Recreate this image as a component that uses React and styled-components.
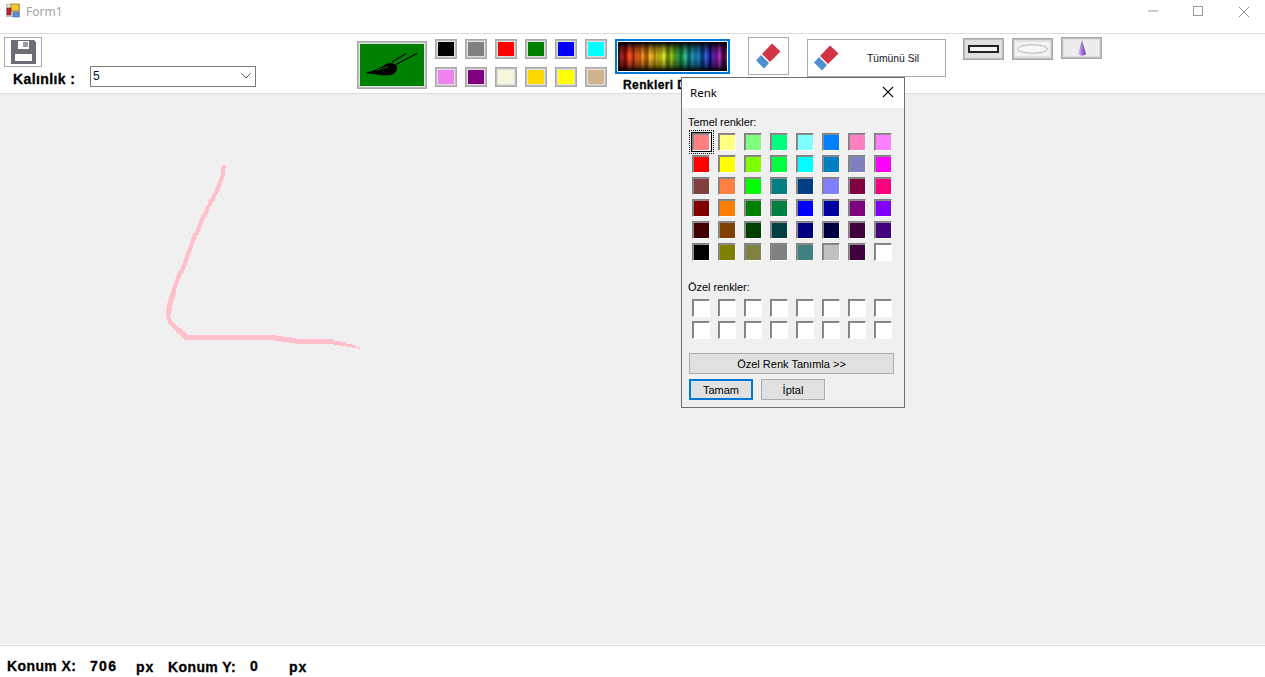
import React from "react";
import styled, { createGlobalStyle } from "styled-components";

const Global = createGlobalStyle`
  html, body { margin: 0; padding: 0; background: #fff; }
  body { font-family: "Liberation Sans", Arial, sans-serif; }
  #root { width: 1265px; height: 677px; overflow: hidden; }
`;

const Window = styled.div`
  position: relative;
  width: 1265px;
  height: 677px;
  display: flex;
  flex-direction: column;
  background: #fff;
  overflow: hidden;
`;

const TitleBar = styled.header`
  height: 33px;
  flex: none;
  display: flex;
  align-items: flex-start;
  border-bottom: 1px solid #dcdcdc;
  padding-left: 6px;
`;
const TitleText = styled.span`
  font: 12px/24px "Noto Sans", "Open Sans", sans-serif;
  color: #a3a3a3;
  margin-left: 6px;
`;
const WinButtons = styled.div`
  margin-left: auto;
  display: flex;
  padding-right: 14px;
  padding-top: 5px;
  gap: 33px;
  svg { display: block; }
`;

const Toolbar = styled.div`
  height: 59px;
  flex: none;
  display: flex;
  align-items: flex-start;
  border-bottom: 1px solid #dcdcdc;
`;
const LeftGroup = styled.div`
  margin: 3px 0 0 4px;
  width: 252px;
`;
const SaveButton = styled.div`
  box-sizing: border-box;
  width: 38px;
  height: 30px;
  border: 1px solid #ababab;
  margin-bottom: -1px;
  display: flex;
  align-items: center;
  justify-content: center;
`;
const ThicknessRow = styled.div`
  display: flex;
  align-items: center;
  padding-left: 9px;
`;
const BoldLabel = styled.span`
  font: bold 14px "Liberation Sans", Arial, sans-serif;
  letter-spacing: 0.4px;
  -webkit-text-stroke: 0.3px #000;
  color: #000;
  white-space: nowrap;
`;
const ThicknessLabel = styled(BoldLabel)`
  width: 77px;
  position: relative;
  top: 2px;
`;
const Combo = styled.div`
  box-sizing: border-box;
  width: 166px;
  height: 21px;
  border: 1px solid #7a7a7a;
  display: flex;
  align-items: center;
  justify-content: space-between;
  padding: 0 4px 2px 2px;
  font-size: 12px;
  color: #001040;
`;
const BrushButton = styled.div`
  box-sizing: border-box;
  margin: 7px 0 0 101px;
  width: 70px;
  height: 48px;
  border: 1px solid #a8a8a8;
  background: #008000;
  box-shadow: inset 0 0 0 1px #bdbdbd, inset 0 0 0 2px #e1e1e1;
  display: flex;
  align-items: center;
  justify-content: center;
`;
const Palette = styled.div`
  margin: 5px 0 0 8px;
  display: grid;
  grid-template-columns: repeat(6, 22px);
  grid-auto-rows: 20px;
  gap: 8px;
`;
const ColorSwatch = styled.div`
  box-sizing: border-box;
  border: 1px solid #a8a8a8;
  box-shadow: inset 0 0 0 1px #bdbdbd, inset 0 0 0 2px #e1e1e1;
  background: ${(p) => p.$c};
`;
const SpectrumColumn = styled.div`
  margin: 5px 0 0 8px;
  width: 115px;
`;
const SpectrumButton = styled.div`
  box-sizing: border-box;
  height: 35px;
  border: 2px solid #0078d7;
  padding: 1px;
  background: #fff;
`;
const SpectrumFill = styled.div`
  height: 100%;
  background:
    linear-gradient(180deg, #000 0%, rgba(0,0,0,.35) 22%, rgba(0,0,0,0) 45%, rgba(0,0,0,0) 55%, rgba(0,0,0,.35) 80%, #000 100%),
    repeating-linear-gradient(90deg, rgba(0,0,0,.2) 0 2px, rgba(255,255,255,.12) 3px 5px, rgba(0,0,0,.1) 6px 7px),
    repeating-linear-gradient(90deg, rgba(255,255,255,.1) 0 3px, rgba(0,0,0,.2) 4px 8px, rgba(255,255,255,.06) 9px 11px),
    linear-gradient(90deg, #200000 0%, #c00000 5%, #f03000 12%, #f07000 22%, #e8b000 33%, #e0e000 40%, #70b000 50%, #10a030 56%, #0090a0 66%, #0060c0 76%, #1010b0 84%, #a000a0 93%, #300030 100%);
`;
const SpectrumLabel = styled(BoldLabel)`
  display: block;
  font-size: 12px;
  padding: 4px 0 0 8px;
  letter-spacing: 0.4px;
`;
const EraserButton = styled.div`
  box-sizing: border-box;
  margin: 3px 0 0 18px;
  width: 41px;
  height: 38px;
  border: 1px solid #ababab;
  display: flex;
  align-items: center;
  justify-content: center;
`;
const ClearButton = styled.div`
  box-sizing: border-box;
  margin: 5px 0 0 18px;
  width: 139px;
  height: 38px;
  border: 1px solid #ababab;
  display: flex;
  align-items: center;
  padding-left: 5px;
  font-size: 10.3px;
  color: #101828;
`;
const ClearText = styled.span`
  margin-left: 27px;
`;
const ShapeButton = styled.div`
  box-sizing: border-box;
  margin: ${(p) => p.$top}px 0 0 ${(p) => p.$left}px;
  width: 41px;
  height: 22px;
  border: 1px solid #a8a8a8;
  box-shadow: inset 0 0 0 1px #bdbdbd;
  background: #e1e1e1;
  display: flex;
  align-items: center;
  justify-content: center;
`;

const Canvas = styled.main`
  height: 550px;
  flex: none;
  background: #f0f0f0;
  svg { display: block; }
`;
const Footer = styled.footer`
  margin-top: 1px;
  flex: 1;
  border-top: 1px solid #dcdcdc;
  display: flex;
  padding: 12px 0 0 7px;
`;
const FooterField = styled(BoldLabel)`
  width: ${(p) => p.$w}px;
  flex: none;
  position: relative;
  top: ${(p) => p.$dy || 0}px;
  letter-spacing: ${(p) => p.$ls || 0.4}px;
`;

const Dialog = styled.div`
  position: absolute;
  left: 681px;
  top: 77px;
  width: 224px;
  height: 331px;
  box-sizing: border-box;
  border: 1px solid #6e6e6e;
  background: #f0f0f0;
  font-size: 11px;
  color: #000;
`;
const DialogTitle = styled.div`
  box-sizing: border-box;
  height: 30px;
  background: #fff;
  display: flex;
  align-items: center;
  justify-content: space-between;
  padding: 0 10px 2px 8px;
  font: 11.5px "Noto Sans", "Open Sans", sans-serif;
  svg { display: block; }
`;
const DialogBody = styled.div`
  padding: 8px 0 0 6px;
`;
const SectionLabel = styled.div`
  line-height: 13px;
  height: 13px;
  letter-spacing: -0.05px;
  margin-top: ${(p) => p.$top || 0}px;
`;
const ColorGrid = styled.div`
  margin: ${(p) => p.$top}px 0 0 4px;
  display: grid;
  grid-template-columns: repeat(8, 18px);
  grid-auto-rows: 18px;
  column-gap: 8px;
  row-gap: 4px;
`;
const BaseCell = styled.div`
  position: relative;
  box-sizing: border-box;
  border-top: 1px solid #808080;
  border-left: 1px solid #808080;
  border-right: 1px solid #fff;
  border-bottom: 1px solid #fff;
  box-shadow: inset 1px 1px 0 #8c8c8c;
  background: ${(p) => p.$c};
`;
const SelectMark = styled.span`
  position: absolute;
  left: -4px;
  top: -4px;
  right: -5px;
  bottom: -4px;
  border: 1px dotted #000;
  &::after {
    content: "";
    position: absolute;
    inset: 1px;
    border: 1px solid #000;
  }
`;
const DefineButton = styled.div`
  box-sizing: border-box;
  margin: 14px 0 0 1px;
  width: 205px;
  height: 21px;
  border: 1px solid #adadad;
  background: #e1e1e1;
  display: flex;
  align-items: center;
  justify-content: center;
  font-size: 11px;
`;
const ButtonRow = styled.div`
  display: flex;
  gap: 8px;
  margin: 5px 0 0 1px;
`;
const DialogButton = styled.div`
  box-sizing: border-box;
  width: 64px;
  height: 21px;
  border: ${(p) => (p.$primary ? "2px solid #0078d7" : "1px solid #adadad")};
  background: #e1e1e1;
  display: flex;
  align-items: center;
  justify-content: center;
  font-size: 11px;
`;

const topColors = ["#000000", "#808080", "#ff0000", "#008000", "#0000ff", "#00ffff", "#ee82ee", "#800080", "#f5f5dc", "#ffd700", "#ffff00", "#d2b48c"];
const baseColors = [
  "#FF8080","#FFFF80","#80FF80","#00FF80","#80FFFF","#0080FF","#FF80C0","#FF80FF",
  "#FF0000","#FFFF00","#80FF00","#00FF40","#00FFFF","#0080C0","#8080C0","#FF00FF",
  "#804040","#FF8040","#00FF00","#008080","#004080","#8080FF","#800040","#FF0080",
  "#800000","#FF8000","#008000","#008040","#0000FF","#0000A0","#800080","#8000FF",
  "#400000","#804000","#004000","#004040","#000080","#000040","#400040","#400080",
  "#000000","#808000","#808040","#808080","#408080","#C0C0C0","#400040","#FFFFFF",
];

const AppIcon = () => (
  <svg width="14" height="16" viewBox="0 0 14 16" style={{ marginTop: 3 }}>
    <rect x="0.5" y="1.5" width="13" height="12" fill="#e8e8e8" stroke="#b9b9b9" />
    <rect x="5" y="1" width="8" height="7" fill="#f3c53a" stroke="#a87a10" strokeWidth="0.8" />
    <rect x="1" y="5" width="4" height="7" fill="#b8272b" stroke="#7a1a1a" strokeWidth="0.6" />
    <rect x="7" y="9" width="6" height="5" fill="#5a8fd8" stroke="#34609c" strokeWidth="0.6" />
  </svg>
);
const Floppy = () => (
  <svg width="25" height="24" viewBox="0 0 25 24">
    <path fill="#6d6d75" fillRule="evenodd" d="M0 0H23L25 2V24H0ZM7 1V9H18V1ZM4 14V21H21V14Z" />
    <rect x="8" y="2" width="4" height="5" fill="#ffffff" />
    <rect x="12" y="2" width="5" height="5" fill="#9c9ca2" />
  </svg>
);
const Chevron = () => (
  <svg width="10" height="6" viewBox="0 0 10 6"><path d="M0.5 0.5l4.5 4.5 4.5-4.5" fill="none" stroke="#555" strokeWidth="1" /></svg>
);
const Brush = () => (
  <svg width="52" height="24" viewBox="0 0 52 24">
    <path d="M26 9L40.6 0.3M30 11.5L51 0.5" stroke="#000" strokeWidth="1.2" fill="none" />
    <path d="M0 19.5C8 18 16 14 20 11C24 9 28 10 31 13C32 17 29 21 25 22C18 23.5 8 21 0 20Z" fill="#000" />
    <path d="M11 17C15 15.5 18 15 22 14" stroke="#0a8a0a" strokeWidth="0.8" fill="none" />
  </svg>
);
const Eraser = () => (
  <svg width="27" height="28" viewBox="0 0 27 28">
    <path d="M17 1.5L25.5 9.5L15 20L7 12Z" fill="#d13447" />
    <path d="M6 13L14 21L9 26.5L1 18.5Z" fill="#4f8fd0" />
  </svg>
);
const RectIcon = () => (
  <svg width="31" height="8" viewBox="0 0 31 8"><rect x="1" y="1" width="29" height="6" fill="#f4f4f4" stroke="#222" strokeWidth="2" /></svg>
);
const EllipseIcon = () => (
  <svg width="35" height="14" viewBox="0 0 35 14" style={{ background: "#f2f2f2" }}><ellipse cx="17.5" cy="7" rx="15" ry="4.2" fill="#f6f6f6" stroke="#b4b4b4" /></svg>
);
const ConeIcon = () => (
  <svg width="35" height="16" viewBox="0 0 35 16" style={{ background: "#ededed" }}>
    <defs><linearGradient id="cone" x1="0" x2="1"><stop offset="0" stopColor="#e0d0f2" /><stop offset="0.6" stopColor="#9468cc" /><stop offset="1" stopColor="#6d3fb0" /></linearGradient></defs>
    <path d="M18 0L22 14C20.5 16 15.5 16 14 14Z" fill="url(#cone)" />
  </svg>
);

/* The free-hand line: the app stamped small squares along the mouse track. */
const track = [
  [224,167,5],[221,180,4],[216,193,4],[208,207,4],[200,225,4],[192,243,4],[185,263,4],[178,278,4],[173,292,4],[170,302,5],[168,315,5],[170,322,4],[178,330,4],[186,337,5],[268,337,5],[283,339,5],[297,341,5],[333,342,5],[347,345,4],[356,347,3],[361,348,2],
];
const stamps = [];
track.slice(1).forEach(([x, y, s], i) => {
  const [px, py] = track[i];
  const n = Math.max(1, Math.round(Math.hypot(x - px, y - py) / 3));
  for (let k = 0; k < n; k++) {
    stamps.push([Math.round(px + ((x - px) * k) / n - s / 2), Math.round(py + ((y - py) * k) / n - s / 2) - 94, s]);
  }
});

export default function App() {
  return (
    <Window>
      <Global />
      <TitleBar>
        <AppIcon />
        <TitleText>Form1</TitleText>
        <WinButtons>
          <svg width="12" height="12" viewBox="0 0 12 12"><path d="M1 6H11" stroke="#999" /></svg>
          <svg width="12" height="12" viewBox="0 0 12 12"><rect x="1.5" y="1.5" width="9" height="9" fill="none" stroke="#999" /></svg>
          <svg width="14" height="14" viewBox="0 0 14 14"><path d="M2 2L12 12M12 2L2 12" stroke="#999" /></svg>
        </WinButtons>
      </TitleBar>
      <Toolbar>
        <LeftGroup>
          <SaveButton><Floppy /></SaveButton>
          <ThicknessRow>
            <ThicknessLabel>Kalınlık :</ThicknessLabel>
            <Combo>5<Chevron /></Combo>
          </ThicknessRow>
        </LeftGroup>
        <BrushButton><Brush /></BrushButton>
        <Palette>
          {topColors.map((c) => <ColorSwatch key={c} $c={c} />)}
        </Palette>
        <SpectrumColumn>
          <SpectrumButton><SpectrumFill /></SpectrumButton>
          <SpectrumLabel>Renkleri D</SpectrumLabel>
        </SpectrumColumn>
        <EraserButton><Eraser /></EraserButton>
        <ClearButton><Eraser /><ClearText>Tümünü Sil</ClearText></ClearButton>
        <ShapeButton $top={4} $left={17}><RectIcon /></ShapeButton>
        <ShapeButton $top={4} $left={8}><EllipseIcon /></ShapeButton>
        <ShapeButton $top={3} $left={8}><ConeIcon /></ShapeButton>
      </Toolbar>
      <Canvas>
        <svg width="1265" height="550" viewBox="0 0 1265 550" shapeRendering="crispEdges">
          {stamps.map(([x, y, s], i) => <rect key={i} x={x} y={y} width={s} height={s} fill="#ffc0cb" />)}
        </svg>
      </Canvas>
      <Footer>
        <FooterField $w={83}>Konum X:</FooterField>
        <FooterField $w={46} $ls={1.3}>706</FooterField>
        <FooterField $w={32} $dy={1} $ls={1}>px</FooterField>
        <FooterField $w={82} $dy={1}>Konum Y:</FooterField>
        <FooterField $w={39}>0</FooterField>
        <FooterField $w={30} $dy={1} $ls={1}>px</FooterField>
      </Footer>
      <Dialog>
        <DialogTitle>
          <span>Renk</span>
          <svg width="12" height="12" viewBox="0 0 12 12"><path d="M1 1L11 11M11 1L1 11" stroke="#111" strokeWidth="1.1" /></svg>
        </DialogTitle>
        <DialogBody>
          <SectionLabel>Temel renkler:</SectionLabel>
          <ColorGrid $top={4}>
            {baseColors.map((c, i) => (
              <BaseCell key={i} $c={c}>{i === 0 && <SelectMark />}</BaseCell>
            ))}
          </ColorGrid>
          <SectionLabel $top={20}>Özel renkler:</SectionLabel>
          <ColorGrid $top={5}>
            {Array.from({ length: 16 }, (_, i) => <BaseCell key={i} $c="#fff" />)}
          </ColorGrid>
          <DefineButton>Özel Renk Tanımla &gt;&gt;</DefineButton>
          <ButtonRow>
            <DialogButton $primary>Tamam</DialogButton>
            <DialogButton>İptal</DialogButton>
          </ButtonRow>
        </DialogBody>
      </Dialog>
    </Window>
  );
}
